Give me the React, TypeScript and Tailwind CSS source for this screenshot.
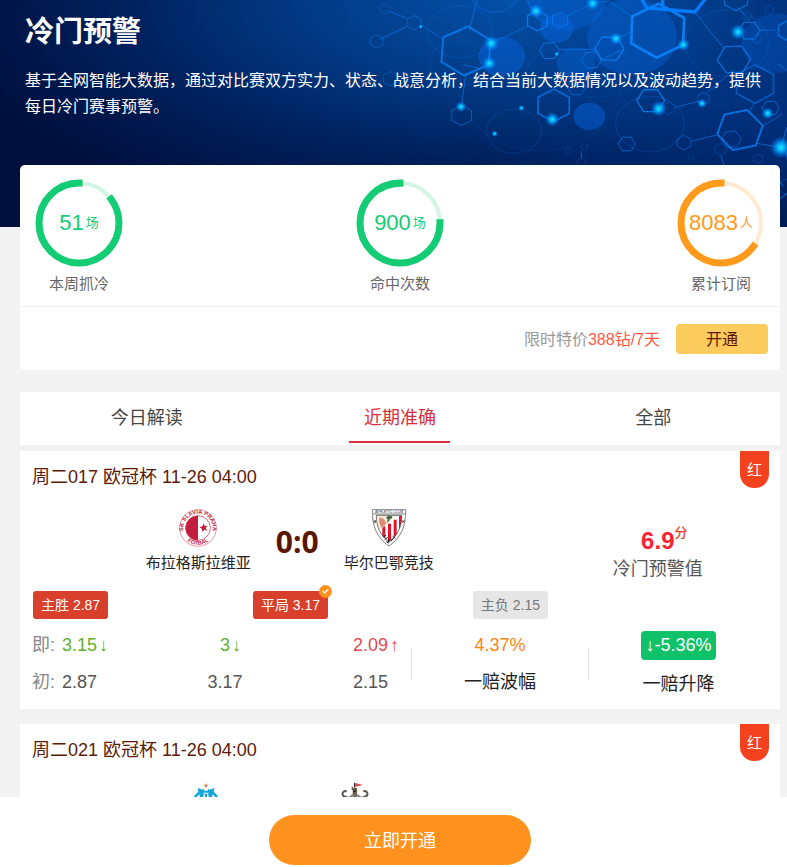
import { Check } from "lucide-react";

const stats = [
  { value: 51, unit: "场", label: "本周抓冷", percent: 85, color: "#14cc73", track: "#d3f5e3" },
  { value: 900, unit: "场", label: "命中次数", percent: 75, color: "#14cc73", track: "#d3f5e3" },
  { value: 8083, unit: "人", label: "累计订阅", percent: 65, color: "#ff9a1a", track: "#ffebd2" },
];

const tabs = ["今日解读", "近期准确", "全部"];

// [cx, cy, radius, rotation, stroke width, opacity]
const hexagons = [
  [258, 153, 82, 4, 6, 0.75],
  [833, 92, 90, 2, 8, 0.95],
  [521, 316, 54, 0, 5, 0.7],
  [1080, 390, 70, 18, 6, 0.75],
  [1062, 178, 50, 28, 4, 0.7],
  [1125, 252, 64, 0, 5, 0.5],
  [812, 302, 42, 30, 4, 0.8],
  [688, 146, 44, 30, 4, 0.8],
  [472, 62, 34, 0, 4, 0.8],
  [540, 60, 26, 0, 3, 0.6],
  [508, 152, 30, 28, 3, 0.7],
  [635, 180, 30, 26, 3, 0.6],
  [590, 262, 28, 30, 3, 0.5],
  [102, 68, 24, 0, 3, 0.45],
  [14, 26, 17, 0, 2, 0.4],
  [-10, 124, 22, 0, 3, 0.4],
  [30, 236, 24, 0, 3, 0.35],
  [70, 234, 20, 0, 2, 0.3],
  [245, 346, 34, 0, 3, 0.55],
  [740, 432, 26, 30, 3, 0.6],
  [912, 428, 24, 0, 3, 0.45],
  [970, 296, 20, 0, 3, 0.45],
  [866, 325, 20, 0, 2, 0.4],
  [1108, 92, 32, 30, 4, 0.6],
  [1225, 92, 34, 0, 5, 0.6],
  [1172, 324, 26, 28, 3, 0.6],
  [1054, 418, 30, 24, 3, 0.5],
  [1068, -4, 40, 0, 4, 0.6],
  [1130, 116, 16, 0, 2, 0.5],
  [1100, 48, 15, 0, 2, 0.4],
  [1022, 448, 20, 0, 2, 0.4],
  [1134, 476, 16, 0, 2, 0.4],
  [1168, 28, 14, 0, 2, 0.4],
  [604, 486, 14, 0, 2, 0.3],
  [565, 452, 10, 0, 2, 0.3],
  [614, 440, 10, 0, 2, 0.3],
  [932, 472, 9, 0, 2, 0.3],
  [1218, 560, 26, 10, 2, 0.4],
];

const bubbles = [
  [560, -10, 120, 0.35],
  [530, 86, 50, 0.45],
  [756, 110, 135, 0.35],
  [365, 170, 70, 0.42],
  [588, 190, 58, 0.35],
  [628, 349, 48, 0.45],
  [1190, 130, 105, 0.25],
];

const rings = [
  [240, 95, 98, 0.2],
  [344, -20, 70, 0.35],
  [235, 190, 86, 0.14],
  [402, 394, 82, 0.16],
  [810, 372, 103, 0.2],
  [525, 215, 84, 0.14],
  [480, 260, 240, 0.1],
  [1040, 130, 125, 0.16],
  [640, 120, 215, 0.12],
];

const glows = [
  [334, 130, 24],
  [328, 190, 22],
  [468, 33, 22],
  [638, 10, 22],
  [708, 116, 20],
  [910, 134, 20],
  [1074, 96, 24],
  [836, 326, 24],
  [517, 358, 22],
  [243, 320, 17],
  [966, 310, 15],
  [1163, 340, 19],
  [1203, 442, 34],
  [424, 324, 10],
  [344, 401, 10],
  [530, 162, 8],
  [122, 80, 7],
];

function hexPoints(cx: number, cy: number, r: number, turn: number) {
  return [0, 1, 2, 3, 4, 5]
    .map((i) => {
      const a = ((i * 60 - 90 + turn) * Math.PI) / 180;
      return `${(cx + r * Math.cos(a)).toFixed(1)},${(cy + r * 0.9 * Math.sin(a)).toFixed(1)}`;
    })
    .join(" ");
}

function Molecules() {
  return (
    <svg
      className="absolute right-0 top-0 h-full w-[407px] overflow-visible"
      viewBox="0 0 1221 681"
      preserveAspectRatio="xMaxYMin slice"
      aria-hidden="true"
    >
      <defs>
        <radialGradient id="glow">
          <stop offset="0" stopColor="#19f0ff" />
          <stop offset="0.35" stopColor="#05b4ff" stopOpacity="0.9" />
          <stop offset="1" stopColor="#0070ff" stopOpacity="0" />
        </radialGradient>
      </defs>
      {bubbles.map(([x, y, r, o], i) => (
        <ellipse key={i} cx={x} cy={y} rx={r} ry={r * 0.85} fill="#0669e6" opacity={o} />
      ))}
      <g fill="none" stroke="#1174ee" strokeWidth="4">
        {rings.map(([x, y, r, o], i) => (
          <ellipse key={i} cx={x} cy={y} rx={r} ry={r * 0.8} opacity={o} />
        ))}
      </g>
      <g fill="none" stroke="#0d7cf2" strokeWidth="3" opacity="0.6">
        <path d="M0 118 80 80M28 34l50 20M126 76l60 40M292 0 268 90M334 130l110-52M562 48l75-38 50-6 72 48" />
        <path d="M540 148h106M664 180l60-30M708 116l45-20M258 216l-12 92M300 205l-50-10M945 36l85 108M1010 405l-74 18M1105 338l20-30M1148 378l60-36M980 280l80-70M1108 60l-36-40M886 322l76-20M604 476v-24M1022 466l14 40M1130 430l72 12M440 0l20 30M1190 190l30 20M1140 90h46" />
      </g>
      <g fill="none" stroke="#0a82fa" strokeLinejoin="round">
        {hexagons.map(([x, y, r, t, w, o], i) => (
          <polygon key={i} points={hexPoints(x, y, r, t)} strokeWidth={w} opacity={o} />
        ))}
      </g>
      <path d="M775-20 800 24 945 36 995-28M848 0v22" fill="none" stroke="#047cff" strokeWidth="10" />
      <path d="M1215 442l12 60M1203 442l18-60M1180 520l30 40M1195 600l26-20" stroke="#078dff" strokeWidth="4" fill="none" opacity="0.5" />
      {glows.map(([x, y, r], i) => (
        <circle key={i} cx={x} cy={y} r={r} fill="url(#glow)" />
      ))}
    </svg>
  );
}

function Ring({ stat }: { stat: (typeof stats)[number] }) {
  const length = 2 * Math.PI * 40;
  return (
    <div className="flex flex-col items-center">
      <div className="relative flex size-[88px] items-center justify-center">
        <svg className="absolute inset-0" viewBox="0 0 88 88" fill="none" aria-hidden="true">
          <circle cx="44" cy="44" r="40" stroke={stat.track} strokeWidth="4" />
          <circle
            cx="44"
            cy="44"
            r="40"
            stroke={stat.color}
            strokeWidth="7"
            strokeLinecap="square"
            strokeDasharray={`${(length * stat.percent) / 100} ${length}`}
            transform="matrix(0 -1 -1 0 88 88)"
          />
        </svg>
        <p className="flex items-center gap-0.5" style={{ color: stat.color }}>
          <span className="text-[22px] leading-7">{stat.value}</span>
          <span className="text-[13px] leading-6">{stat.unit}</span>
        </p>
      </div>
      <p className="mt-[5px] text-[15px] leading-6 text-[#666]">{stat.label}</p>
    </div>
  );
}

function SlaviaLogo() {
  return (
    <svg className="size-[38px]" viewBox="0 0 114 114" role="img" aria-label="布拉格斯拉维亚">
      <defs>
        <path id="slavia-top" d="M24 87A44 44 0 1 1 90 87" />
        <path id="slavia-bottom" d="M16 87A51 51 0 0 0 98 87" />
      </defs>
      <circle cx="57" cy="57" r="55" fill="#fff" stroke="#d5667c" strokeWidth="2" />
      <circle cx="57" cy="57" r="37" fill="#fff" stroke="#c41e3f" strokeWidth="2" />
      <path d="M57 20a37 37 0 0 0 0 74z" fill="#c41e3f" />
      <path d="m74 43 3 8 9-1-6 7 5 8-9-3-7 6v-9l-8-4 9-3z" fill="#c41e3f" />
      <g fill="#c41e3f" fontFamily="Liberation Sans, sans-serif" fontWeight="700" fontSize="17" textAnchor="middle">
        <text>
          <textPath href="#slavia-top" startOffset="50%">SK SLAVIA PRAHA</textPath>
        </text>
        <text>
          <textPath href="#slavia-bottom" startOffset="50%">FOTBAL</textPath>
        </text>
      </g>
    </svg>
  );
}

function AthleticLogo() {
  return (
    <svg className="size-[38px]" viewBox="0 0 114 114" role="img" aria-label="毕尔巴鄂竞技">
      <defs>
        <clipPath id="athletic-field">
          <path d="M19 19h76c0 36-12 60-38 80C31 79 19 55 19 19z" />
        </clipPath>
      </defs>
      <path d="M7 2h100c1 48-13 84-50 109C20 86 6 50 7 2z" fill="#fff" stroke="#444" strokeWidth="2" />
      <path d="M9 15h96" stroke="#444" strokeWidth="2" />
      <text x="57" y="13" textAnchor="middle" fontSize="11" fontFamily="Liberation Sans, sans-serif" fill="#333">
        ATHLETIC CLUB
      </text>
      <g clipPath="url(#athletic-field)">
        <path d="M19 17h76v90H19z" fill="#fff" />
        <path d="M37 52h9v50h-9zM54 44h9v60h-9zM71 32h9v70h-9zM87 20h9v70h-9z" fill="#e5122c" />
        <path d="M19 17h62L36 58 26 66z" fill="#f4ead8" />
        <path d="M28 27c9-4 16 4 21 17l-14 13c-6-8-9-18-7-30z" fill="#db8b76" />
        <path d="M56 20c-7 0-9 9-3 10l-2 12 7-7 1-5c9 0 10-9 3-10z" fill="#3f6d45" />
      </g>
      <path d="M19 19h76c0 36-12 60-38 80C31 79 19 55 19 19z" fill="none" stroke="#333" strokeWidth="2" />
      <path d="m11 34 7 7m-7 0 7-7m78 0 7 7m-7 0 7-7M40 84l8-5m-4 13 9-7m2 17V91m8 5 8-9m-3-5 8 6m-27 9 6 5" stroke="#222" strokeWidth="3" />
    </svg>
  );
}

function MarseilleLogo() {
  return (
    <svg className="size-[38px]" viewBox="0 0 114 114" role="img" aria-label="马赛">
      <path d="m57 3 2 5 6 0-5 4 2 6-5-4-5 4 2-6-5-4 6 0z" fill="#c98a63" />
      <path
        d="m32 18 15 5 4-3v6h12v-6l4 3 15-5-2 11c12 9 18 22 18 37a41 41 0 0 1-82 0c0-15 6-28 18-37z"
        fill="#12a5dc"
      />
      <path d="m28 46 9-9 2 9zm58 0-9-9-2 9zM49 32h16v3H49zM48 46l3-9h3v9zm18 0-3-9h-3v9z" fill="#fff" />
    </svg>
  );
}

function NewcastleLogo() {
  return (
    <svg className="size-[38px]" viewBox="0 0 114 114" role="img" aria-label="纽卡斯尔联">
      <path d="M50 46V24h-3V14h4v4h4v-4h3v4h5v28z" fill="#6b6047" />
      <path d="M54 2h3v14h-3zM52 24h8v6h-8z" fill="#333" />
      <path d="m57 3 23 5-10 4-13 2z" fill="#e24b55" />
      <path
        d="M32 29c-7-5-14 2-12 9 2 6 8 7 12 5M82 29c7-5 14 2 12 9-2 6-8 7-12 5"
        fill="none"
        stroke="#5d5748"
        strokeWidth="6"
      />
      <path d="M30 46h12l6-6h18l6 6h12" fill="none" stroke="#777" strokeWidth="5" />
      <path d="M20 50h74c0 28-14 46-37 60-23-14-37-32-37-60z" fill="#222" />
    </svg>
  );
}

type Odds = { now: string; trend: "down" | "up"; first: string };

type Match = {
  title: string;
  home: string;
  away: string;
  homeLogo: React.ReactNode;
  awayLogo: React.ReactNode;
  score: string;
  warning: string;
  picks: { text: string; active: boolean; hit: boolean }[];
  odds: Odds[];
  swing: string;
  change: string;
};

const matches: Match[] = [
  {
    title: "周二017 欧冠杯 11-26 04:00",
    home: "布拉格斯拉维亚",
    away: "毕尔巴鄂竞技",
    homeLogo: <SlaviaLogo />,
    awayLogo: <AthleticLogo />,
    score: "0:0",
    warning: "6.9",
    picks: [
      { text: "主胜 2.87", active: true, hit: false },
      { text: "平局 3.17", active: true, hit: true },
      { text: "主负 2.15", active: false, hit: false },
    ],
    odds: [
      { now: "3.15", trend: "down", first: "2.87" },
      { now: "3", trend: "down", first: "3.17" },
      { now: "2.09", trend: "up", first: "2.15" },
    ],
    swing: "4.37%",
    change: "↓-5.36%",
  },
];

const cellAlign = ["text-left", "text-center", "text-right"];

function MatchHeader({ title }: { title: string }) {
  return (
    <div className="flex items-start justify-between pl-3 pr-[11px]">
      <h2 className="pt-3.5 text-[18px] leading-6 text-[#5c1a08]">{title}</h2>
      <span className="-mb-2 h-[37px] w-[29px] rounded-b-[14px] bg-[#f4411e] text-center text-[15px] leading-[37px] text-white">
        红
      </span>
    </div>
  );
}

function Team({ logo, name }: { logo: React.ReactNode; name: string }) {
  return (
    <div className="flex flex-col items-center">
      {logo}
      <p className="mt-1 text-[15px] leading-6 text-[#222]">{name}</p>
    </div>
  );
}

function MatchCard({ match }: { match: Match }) {
  return (
    <article className="bg-white pb-2">
      <MatchHeader title={match.title} />

      <div className="mt-5 flex items-start">
        <div className="flex w-[71%] items-center justify-center gap-[25px]">
          <Team logo={match.homeLogo} name={match.home} />
          <p className="font-['Open_Sans',sans-serif] text-[30px] font-bold leading-9 text-[#5c1600]">{match.score}</p>
          <Team logo={match.awayLogo} name={match.away} />
        </div>
        <div className="flex flex-1 flex-col items-center pr-6 pt-[18px]">
          <p className="relative text-[24px] font-bold leading-7 text-[#f92433]">
            {match.warning}
            <sup className="absolute left-full top-0 text-[13px] font-medium leading-3 text-[#f4411e]">分</sup>
          </p>
          <p className="text-[18px] leading-7 text-[#555]">冷门预警值</p>
        </div>
      </div>

      <ul className="mt-2 flex w-[70%] justify-between pl-[13px] pr-1">
        {match.picks.map((pick) => (
          <li
            key={pick.text}
            className={
              pick.active
                ? "relative rounded-[3px] bg-[#d8402b] px-2 text-[14px] leading-7 text-white"
                : "relative rounded-[3px] bg-[#e6e6e6] px-2 text-[14px] leading-7 text-[#777]"
            }
          >
            {pick.text}
            {pick.hit && (
              <span className="absolute -right-1 -top-1.5 flex size-[13px] items-center justify-center rounded-full bg-[#ff921e] text-white">
                <Check size={7} strokeWidth={5} />
              </span>
            )}
          </li>
        ))}
      </ul>

      <div className="mt-2 grid grid-cols-[391fr_178fr_191fr] items-center text-[18px] text-[#555]">
        <div className="pl-3 pr-[23px]">
          <table className="w-full table-fixed">
            <tbody>
              <tr className="h-[37px]">
                <th scope="row" className="w-[30px] p-0 text-left font-normal text-[#888]">即:</th>
                {match.odds.map((odd, i) => (
                  <td key={i} className={cellAlign[i]}>
                    <span className={odd.trend === "down" ? "relative text-[#5fb02c]" : "relative text-[#e34850]"}>
                      {odd.now}
                      <span className="absolute left-full top-0 pl-0.5 leading-5">{odd.trend === "down" ? "↓" : "↑"}</span>
                    </span>
                  </td>
                ))}
              </tr>
              <tr className="h-[37px]">
                <th scope="row" className="p-0 text-left font-normal text-[#888]">初:</th>
                {match.odds.map((odd, i) => (
                  <td key={i} className={cellAlign[i]}>{odd.first}</td>
                ))}
              </tr>
            </tbody>
          </table>
        </div>
        <div className="flex items-center text-center">
          <span className="h-8 w-px bg-[#e2e2e2]" />
          <div className="flex-1">
            <p className="leading-[37px] text-[#ff8412]">{match.swing}</p>
            <p className="leading-[37px] text-[#222]">一赔波幅</p>
          </div>
          <span className="h-8 w-px bg-[#e2e2e2]" />
        </div>
        <div className="pr-3 text-center">
          <p className="mx-auto mt-1 w-fit rounded bg-[#0fc168] px-1 leading-[29px] text-white">{match.change}</p>
          <p className="mt-2 leading-[33px] text-[#222]">一赔升降</p>
        </div>
      </div>
    </article>
  );
}

export default function App() {
  return (
    <div className="flex h-screen flex-col bg-[#f3f3f3] font-['Liberation_Sans','Noto_Sans_CJK_SC',sans-serif]">
      <main className="min-h-0 flex-1 overflow-y-auto [scrollbar-width:none]">
        <header className="relative h-[227px] overflow-hidden bg-[radial-gradient(ellipse_40%_90%_at_100%_60%,#0046aa66_0%,#0046aa00_100%),radial-gradient(ellipse_75%_105%_at_65%_0%,#0450a8_0%,#023a85_35%,#001e58_70%,#000f3c_100%)] text-white">
          <Molecules />
          <div className="relative pl-[25px] pr-5 pt-3">
            <h1 className="text-[29px] font-bold leading-10">冷门预警</h1>
            <p className="mt-4 text-[16px] leading-[26px]">
              基于全网智能大数据，通过对比赛双方实力、状态、战意分析，结合当前大数据情况以及波动趋势，提供每日冷门赛事预警。
            </p>
          </div>
        </header>

        <div className="pb-4 pl-5 pr-[7px]">
          <section className="relative -mt-[62px] rounded-[5px] bg-white">
            <div className="flex justify-between border-b border-[#f0f0f0] px-[15px] pb-2.5 pt-3.5">
              {stats.map((stat) => (
                <Ring key={stat.label} stat={stat} />
              ))}
            </div>
            <div className="flex h-[63px] items-center justify-end gap-4 pr-3">
              <p className="pt-0.5 text-[16px] text-[#999]">
                限时特价<span className="text-[#ff5a45]">388钻/7天</span>
              </p>
              <button className="h-[30px] w-[92px] rounded bg-[#fbcb5e] pt-0.5 text-[16px] text-[#5c1600]">开通</button>
            </div>
          </section>

          <nav className="mt-[22px] grid h-[53px] grid-cols-3 bg-white text-[18px] text-[#444]">
            {tabs.map((tab, i) => (
              <button
                key={tab}
                className={
                  i === 1
                    ? "mx-auto h-[51px] w-[101px] border-b-2 border-[#d5303b] pt-1 text-[#d5303b]"
                    : "mx-auto h-[51px] w-[101px] border-b-2 border-transparent pt-1"
                }
              >
                {tab}
              </button>
            ))}
          </nav>

          <div className="mt-1.5 flex flex-col gap-[15px]">
            {matches.map((match) => (
              <MatchCard key={match.title} match={match} />
            ))}
            <article className="bg-white pb-6">
              <MatchHeader title="周二021 欧冠杯 11-26 04:00" />
              <div className="mt-5 flex w-[71%] justify-center gap-[93px]">
                <MarseilleLogo />
                <div className="flex w-[75px] justify-center">
                  <NewcastleLogo />
                </div>
              </div>
            </article>
          </div>
        </div>
      </main>

      <footer className="flex justify-center bg-white pb-0.5 pl-5 pr-[7px] pt-[18px]">
        <button className="h-[50px] w-[262px] rounded-full bg-[#ff921e] pt-0.5 text-[18px] text-white">立即开通</button>
      </footer>
    </div>
  );
}
